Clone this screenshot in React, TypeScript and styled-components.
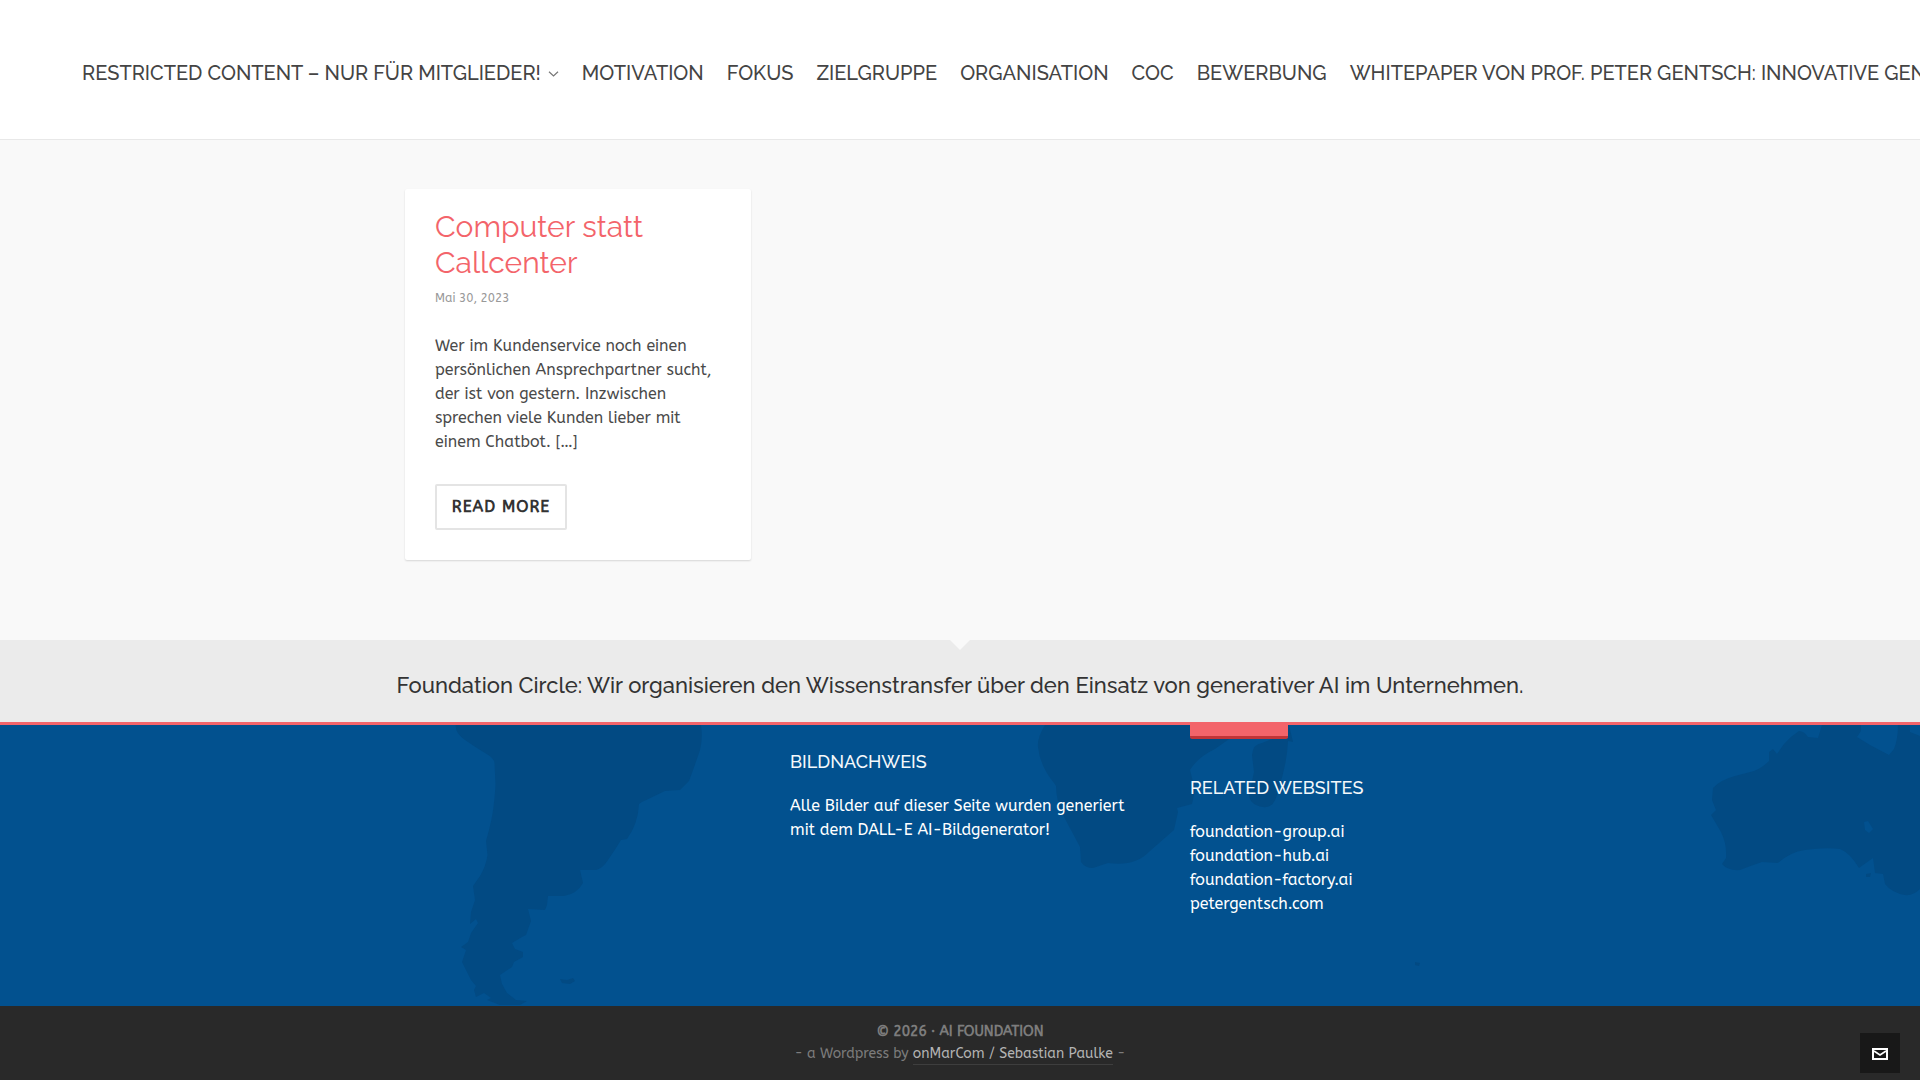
import React from 'react';
import styled, { createGlobalStyle } from 'styled-components';

const heading = '"Raleway", "Lato", sans-serif';
const body = '"ABeeZee", "Open Sans", sans-serif';

const Global = createGlobalStyle`
  *, *::before, *::after { box-sizing: border-box; }
  html, body { margin: 0; padding: 0; }
  body { overflow: hidden; background: #292929; font-family: ${body}; font-size: 16px; line-height: 24px; color: #4a4a4a; }
  h2, h3, p, ul { margin: 0; padding: 0; font-weight: 400; list-style: none; }
  a { color: inherit; text-decoration: none; }
`;

const Page = styled.div`
  display: flex;
  flex-direction: column;
  width: 100%;
  height: 1080px;
  overflow: hidden;
`;

const Header = styled.header`
  flex: none;
  height: 140px;
  background: #fff;
  border-bottom: 1px solid #e8e8e8;
  overflow: hidden;
`;

const Nav = styled.nav`
  display: flex;
  align-items: center;
  gap: 23px;
  height: 146px;
  padding-left: 82px;
  font: 500 20px/24px ${heading};
  color: #444;
  white-space: nowrap;
`;

const NavItem = styled.a`
  display: inline-flex;
  flex: none;
  align-items: center;
`;

const Caret = styled.svg`
  width: 11px;
  height: 6px;
  margin: 2px 0 0 7px;
`;

const Main = styled.main`
  flex: none;
  height: 500px;
  padding: 49px 405px 0;
  background: #f9f9f9;
`;

const Card = styled.article`
  width: 346px;
  height: 371px;
  padding: 20px 30px 0;
  background: #fff;
  border-radius: 2px;
  box-shadow: 0 1px 2px rgba(0, 0, 0, 0.14);
`;

const CardTitle = styled.h2`
  font: 400 30px/36px ${heading};
  color: #f3646a;
`;

const CardDate = styled.p`
  margin-top: 7px;
  font-size: 12px;
  line-height: 20px;
  color: #999;
`;

const Excerpt = styled.p`
  margin: 26px -10px 0 0;
  padding-right: 8px;
`;

const ReadMore = styled.a`
  display: flex;
  align-items: center;
  justify-content: center;
  width: 132px;
  height: 46px;
  margin-top: 30px;
  border: 2px solid #e4e4e4;
  border-radius: 2px;
  font-weight: 700;
  letter-spacing: 1px;
  color: #333;
`;

const Slogan = styled.section`
  position: relative;
  flex: none;
  display: flex;
  justify-content: center;
  height: 85px;
  padding-top: 32px;
  background: #ebebeb;
  border-bottom: 3px solid #f3646a;
  font: 500 22px/26px ${heading};
  color: #333;
  white-space: nowrap;

  &::before {
    content: '';
    position: absolute;
    top: 0;
    left: 50%;
    margin-left: -10px;
    border: 10px solid transparent;
    border-top-color: #f9f9f9;
    border-bottom: 0;
  }
`;

const Footer = styled.footer`
  position: relative;
  flex: none;
  display: grid;
  grid-template-columns: 360px 360px 360px;
  column-gap: 40px;
  height: 281px;
  padding-left: 390px;
  background: #02518f;
  color: #fff;
`;

const WorldMap = styled.svg`
  position: absolute;
  inset: 0;
  width: 100%;
  height: 100%;
  fill: #024a83;
`;

const Widget = styled.div`
  position: relative;
`;

const WidgetTitle = styled.h3<{ $top: number }>`
  padding-top: ${(p) => p.$top}px;
  font: 500 18px/22px ${heading};
  color: #f4f8fb;
  text-transform: uppercase;
`;

const WidgetText = styled.div`
  margin-top: 21px;
  white-space: nowrap;
`;

const Tab = styled.a`
  display: block;
  width: 98px;
  height: 14px;
  background: #f3646a;
  border-bottom: 3px solid #c13438;
  border-radius: 0 0 2px 2px;
`;

const Bottom = styled.div`
  position: relative;
  flex: 1;
  padding-top: 15px;
  background: #292929;
  font-size: 14px;
  line-height: 22px;
  color: #7c7c7c;
  text-align: center;
`;

const Copyright = styled.p`
  font-weight: 700;
`;

const Credit = styled.a`
  display: inline-block;
  line-height: 20px;
  color: #b4b4b4;
  border-bottom: 1px solid #3e3e3e;
`;

const MailButton = styled.a`
  position: absolute;
  top: 27px;
  right: 20px;
  display: flex;
  align-items: center;
  justify-content: center;
  width: 40px;
  height: 40px;
  padding-top: 2px;
  background: #181818;
`;

const navItems = [
  'MOTIVATION',
  'FOKUS',
  'ZIELGRUPPE',
  'ORGANISATION',
  'COC',
  'BEWERBUNG',
  'WHITEPAPER VON PROF. PETER GENTSCH: INNOVATIVE GENERATIVE AI',
];

const sites = ['foundation-group.ai', 'foundation-hub.ai', 'foundation-factory.ai', 'petergentsch.com'];

export default function App() {
  return (
    <Page>
      <Global />
      <Header>
        <Nav>
          <NavItem href="#">
            RESTRICTED CONTENT – NUR FÜR MITGLIEDER!
            <Caret viewBox="0 0 11 6" fill="none" stroke="#777" strokeWidth="1.2">
              <path d="M1 .8 5.500 5 10 .8" />
            </Caret>
          </NavItem>
          {navItems.map((label) => (
            <NavItem href="#" key={label}>{label}</NavItem>
          ))}
        </Nav>
      </Header>
      <Main>
        <Card>
          <CardTitle>Computer statt Callcenter</CardTitle>
          <CardDate>Mai 30, 2023</CardDate>
          <Excerpt>
            Wer im Kundenservice noch einen persönlichen Ansprechpartner sucht, der ist von gestern. Inzwischen
            sprechen viele Kunden lieber mit einem Chatbot. […]
          </Excerpt>
          <ReadMore href="#">READ MORE</ReadMore>
        </Card>
      </Main>
      <Slogan>
        Foundation Circle: Wir organisieren den Wissenstransfer über den Einsatz von generativer AI im Unternehmen.
      </Slogan>
      <Footer>
        <WorldMap viewBox="0 725 1920 281" preserveAspectRatio="none" aria-hidden="true">
          <path d="M455.7 725Q455 733 465 740Q475 747 485 753Q494 758 494.500 763L495.500 785Q494 812 489 830L486 841L487.500 855Q486 866 480 876L473 886L475 900L471 912L470 924L476 919L478 923L471 933L468 942L461 947L466 950L462 962L471 980L476 986L474 990L476 997L484 993L491 998L487 1000L500 1005L520 1005L527 1001L516 1000L507 993L502 984L500 975L512 967L514 962L523 957L523 952L515 949L512 943L522 937L526 935L531 921L528 909L545 910L547 905L548 896L564 896Q577 894 583 883L580 870L596 870Q603 868 608 860Q615 850 621 840L627 839Q638 824 639 804L642 802L665 791L680 790L689 781Q695 765 700 750Q703 738 701 725Z" />
          <path d="M560 979L567 980L573 978L575 981L570 984L562 983Z" />
          <path d="M1045 725Q1037 738 1038 747Q1040 766 1054 783L1056 786Q1056 800 1063 815L1080 847L1081 862Q1085 868 1093 868L1108 863Q1135 867 1150 851L1174 830L1178 812L1177 808L1192 804L1195 790L1190 770Q1198 757 1215 749L1232 737L1245 725Z" />
          <path d="M1289 725L1293 742L1288 741Q1287 765 1278 790Q1275 809 1263 807Q1250 805 1249 795L1254 772L1252 755Q1253 744 1262 743L1280 736L1284 725Z" />
          <path fillRule="evenodd" d="M1822 725L1818 738L1808 737Q1804 731 1799 731Q1791 736 1784 744L1777 754L1773 749L1769 752L1769 761Q1762 768 1754 771L1735 776Q1720 780 1713 788L1712 800L1716 810L1711 815L1721 832Q1727 844 1726 858L1722 864Q1728 871 1740 870Q1750 866 1762 862L1778 863Q1790 852 1805 850Q1825 847 1840 849Q1850 853 1859 868L1873 858L1875 873L1883 874L1885 884Q1892 893 1905 895Q1913 896 1920 889V736L1910 732V725H1898Q1898 739 1894 749L1889 755L1870 745L1857 737L1861 731V725ZM1864 822L1868 821L1873 829L1869 833L1865 830Z" />
          <path d="M1866 874L1871 873L1870 877L1866 877Z" />
          <path d="M1415 962L1420 963L1419 966L1415 965Z" />
        </WorldMap>
        <Widget />
        <Widget>
          <WidgetTitle $top={26}>Bildnachweis</WidgetTitle>
          <WidgetText>
            Alle Bilder auf dieser Seite wurden generiert
            <br />
            mit dem DALL-E AI-Bildgenerator!
          </WidgetText>
        </Widget>
        <Widget>
          <Tab href="#" />
          <WidgetTitle $top={38}>Related Websites</WidgetTitle>
          <WidgetText as="ul">
            {sites.map((site) => (
              <li key={site}><a href="#">{site}</a></li>
            ))}
          </WidgetText>
        </Widget>
      </Footer>
      <Bottom>
        <Copyright>© 2026 · AI FOUNDATION</Copyright>
        <p>- a Wordpress by <Credit href="#">onMarCom / Sebastian Paulke</Credit> -</p>
        <MailButton href="#">
          <svg width="16" height="12" viewBox="0 0 16 12" fill="none" stroke="#fff" strokeWidth="2">
            <path d="M1 1H15V11H1Z" />
            <path d="M2 3 8 7 14 3" strokeWidth="1.6" />
          </svg>
        </MailButton>
      </Bottom>
    </Page>
  );
}
